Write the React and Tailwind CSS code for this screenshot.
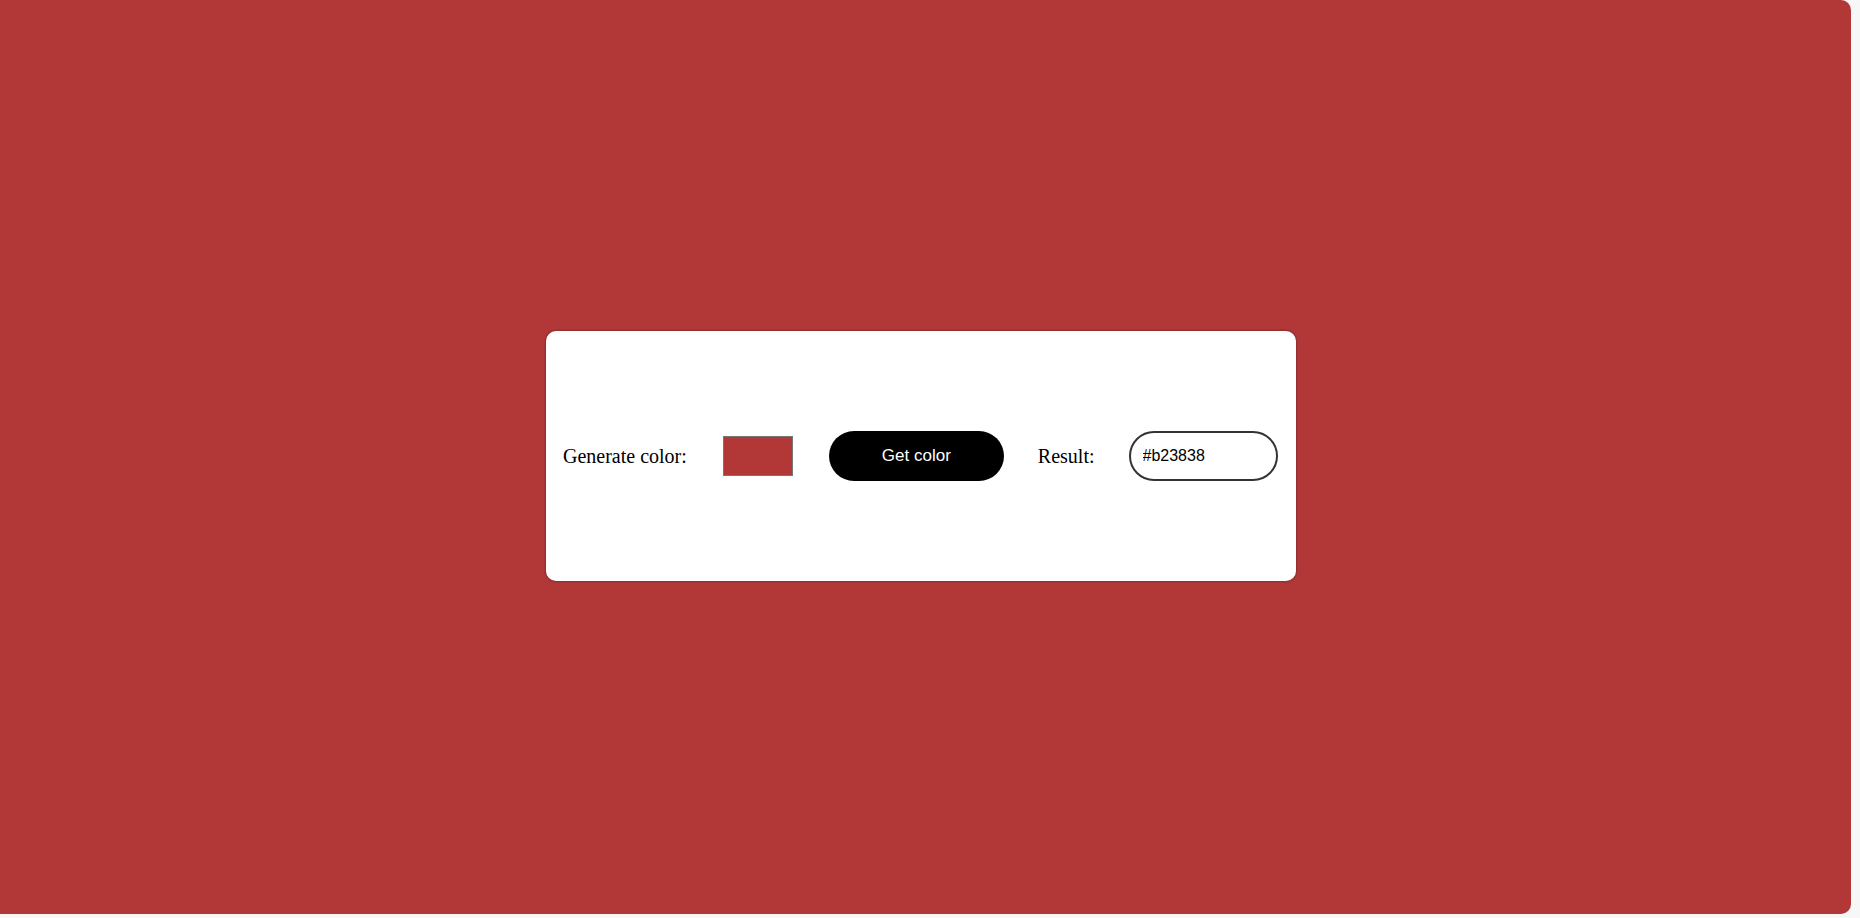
import { useState } from 'react'

export default function App() {
  const [color, setColor] = useState('#b23838')

  return (
    <div className="h-[918px] w-[1860px] bg-[#f7f7f7]">
      <div
        className="flex h-[914px] w-[1851px] items-center justify-center rounded-r-[10px]"
        style={{ backgroundColor: color }}
      >
        <div className="ml-[-9px] mt-[-2px] flex h-[250px] w-[750px] items-center rounded-[10px] bg-white pl-[17px] shadow-[0_0_3px_rgba(0,0,0,0.45)]">
          <span className="text-[20px] text-black [font-family:'Liberation_Serif',serif]">Generate color:</span>
          <div
            className="ml-[36px] h-[40px] w-[70px] border border-[#767676]"
            style={{ backgroundColor: color }}
          />
          <button
            type="button"
            className="ml-[36px] h-[50px] w-[175px] rounded-full bg-black text-[17px] text-white [font-family:'Liberation_Sans',sans-serif]"
            onClick={() => setColor('#b23838')}
          >
            Get color
          </button>
          <span className="ml-[34px] text-[20px] text-black [font-family:'Liberation_Serif',serif]">Result:</span>
          <input
            type="text"
            readOnly
            value={color}
            className="ml-[34px] h-[50px] w-[149px] rounded-full border-2 border-[#333] bg-white px-[12px] text-[16px] text-black outline-none [font-family:'Liberation_Sans',sans-serif]"
          />
        </div>
      </div>
    </div>
  )
}
